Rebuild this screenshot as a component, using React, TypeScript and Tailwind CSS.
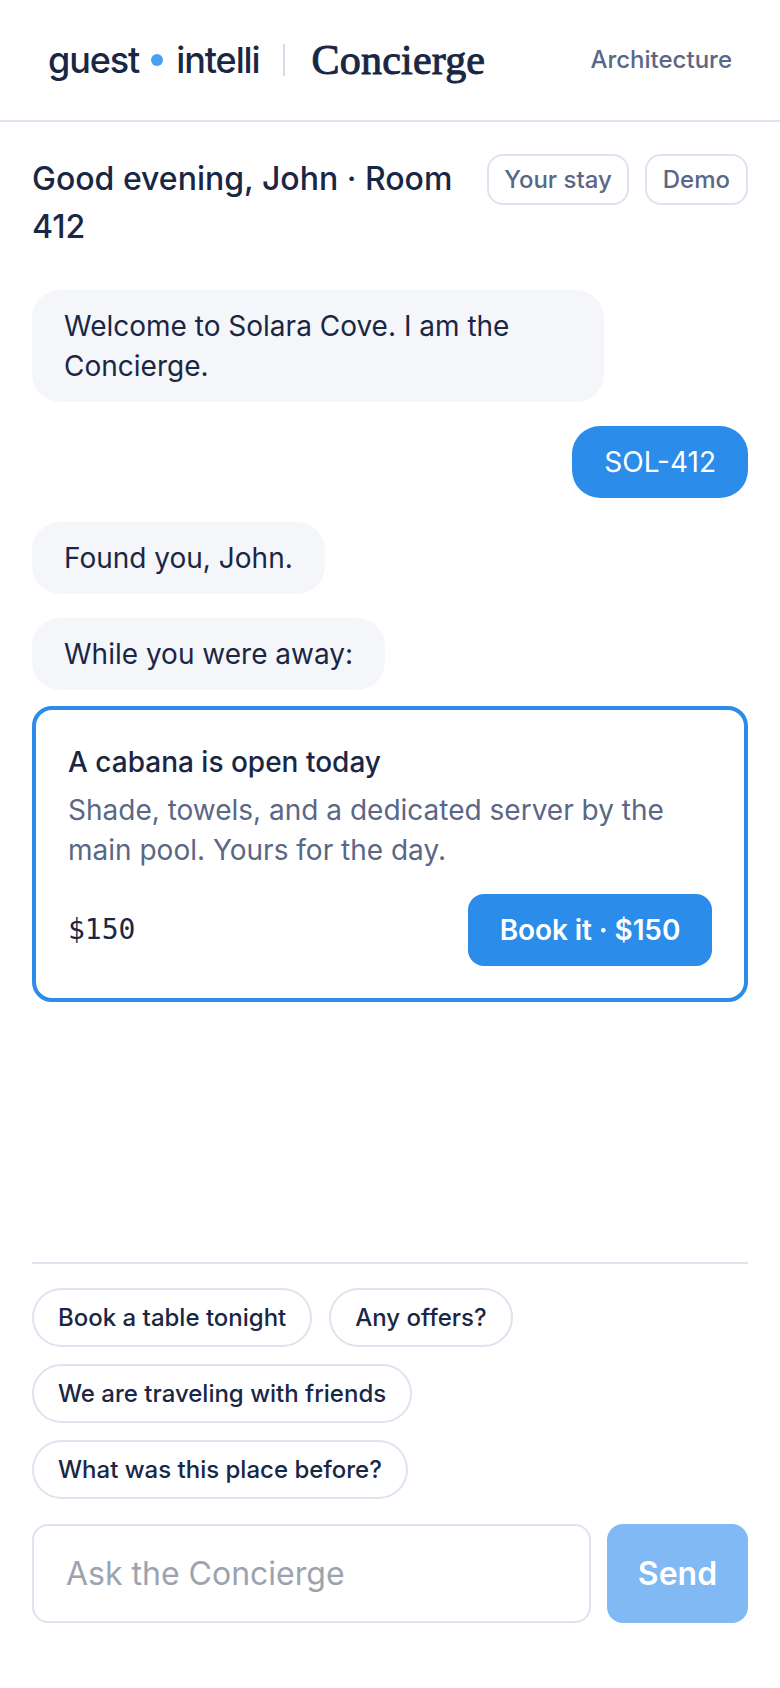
function Bubble({ children, wide }: { children: React.ReactNode; wide?: boolean }) {
  return (
    <div className={`self-start rounded-[28px] bg-[#f4f6fa] px-8 py-4 text-[28px] leading-[40px] text-[#1a2744] ${wide ? "w-[572px]" : ""}`}>
      {children}
    </div>
  );
}

function Chip({ children }: { children: React.ReactNode }) {
  return (
    <button className="h-[59px] rounded-full border-2 border-[#dde3ef] bg-white px-6 text-[24px] font-medium text-[#1a2744]">
      {children}
    </button>
  );
}

export default function App() {
  return (
    <div className="flex h-[1688px] w-[780px] flex-col bg-white [font-family:Inter,sans-serif]">
      <header className="flex h-[122px] items-center justify-between border-b-2 border-[#dde3ef] px-12">
        <div className="flex items-center">
          <span className="text-[36px] font-[550] tracking-[-1.1px] text-[#1a2744]">guest</span>
          <span className="mr-[13px] ml-3 h-3 w-3 rounded-full bg-[#4a9ff0]" />
          <span className="text-[36px] font-[550] tracking-[-1.1px] text-[#1a2744]">intelli</span>
          <span className="mr-[27px] ml-[23px] h-8 w-[2px] bg-[#d5dcea]" />
          <span className="[font-family:'Liberation_Serif',serif] text-[42px] tracking-[0.2px] [-webkit-text-stroke:1px_#1a2744] text-[#1a2744]">Concierge</span>
        </div>
        <span className="text-[24px] font-medium text-[#5a6785]">Architecture</span>
      </header>

      <main className="flex flex-1 flex-col px-8">
        <div className="flex items-start justify-between pt-8">
          <h1 className="mt-px w-[430px] text-[32px] font-[550] leading-[48px] text-[#1a2744]">Good evening, John · Room 412</h1>
          <div className="flex gap-4">
            <button className="h-[51px] rounded-[16px] border-2 border-[#dde3ef] px-[15px] text-[24px] font-medium text-[#5a6785]">Your stay</button>
            <button className="h-[51px] rounded-[16px] border-2 border-[#dde3ef] px-4 text-[24px] font-medium text-[#5a6785]">Demo</button>
          </div>
        </div>

        <div className="mt-[39px] flex flex-1 flex-col gap-6">
          <Bubble wide>Welcome to Solara Cove. I am the Concierge.</Bubble>
          <div className="self-end rounded-[28px] bg-[#2b8cea] px-8 py-4 text-[28px] leading-[40px] text-white">SOL-412</div>
          <Bubble>Found you, John.</Bubble>
          <Bubble>While you were away:</Bubble>
          <div className="-mt-2 rounded-[20px] border-[4px] border-[#2b8cea] bg-white p-8">
            <h2 className="text-[28px] font-[550] leading-[40px] text-[#1a2744]">A cabana is open today</h2>
            <p className="mt-2 text-[28px] leading-[40px] text-[#5a6785]">Shade, towels, and a dedicated server by the main pool. Yours for the day.</p>
            <div className="mt-6 flex items-center justify-between">
              <span className="[font-family:'DejaVu_Sans_Mono',monospace] text-[28px] text-[#1a2744]">$150</span>
              <button className="h-[72px] w-[244px] rounded-[16px] bg-[#2b8cea] text-[28px] font-semibold tracking-[-0.1px] text-white">Book it · $150</button>
            </div>
          </div>
        </div>

        <div className="mb-[65px] border-t-2 border-[#dde3ef] pt-6">
          <div className="flex flex-wrap gap-[17px]">
            <Chip>Book a table tonight</Chip>
            <Chip>Any offers?</Chip>
            <div className="flex w-full"><Chip>We are traveling with friends</Chip></div>
            <div className="flex w-full"><Chip>What was this place before?</Chip></div>
          </div>
          <div className="mt-[25px] flex gap-4">
            <div className="flex h-[99px] flex-1 items-center rounded-[16px] border-2 border-[#dde3ef] px-8 text-[32px] text-[#9ca3af]">Ask the Concierge</div>
            <button className="h-[99px] w-[141px] rounded-[16px] bg-[#80b9f3] text-[32px] font-semibold text-white">Send</button>
          </div>
        </div>
      </main>
    </div>
  );
}
